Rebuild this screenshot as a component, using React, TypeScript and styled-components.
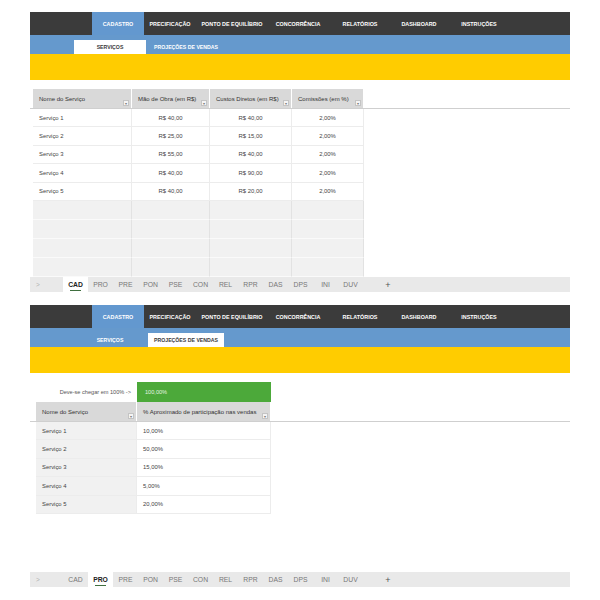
import React from 'react';
import styled, {createGlobalStyle} from 'styled-components';

const GlobalStyle = createGlobalStyle`
  body {
    margin: 0;
    background: #fff;
    font-family: 'Liberation Sans', Arial, sans-serif;
  }
`;

const MENU = [
  {label: 'CADASTRO', width: 52},
  {label: 'PRECIFICAÇÃO', width: 52},
  {label: 'PONTO DE EQUILÍBRIO', width: 72},
  {label: 'CONCORRÊNCIA', width: 60},
  {label: 'RELATÓRIOS', width: 64},
  {label: 'DASHBOARD', width: 54},
  {label: 'INSTRUÇÕES', width: 66},
];

const SUBTABS = [
  {label: 'SERVIÇOS', width: 72},
  {label: 'PROJEÇÕES DE VENDAS', width: 76},
];

const SHEETS = ['CAD', 'PRO', 'PRE', 'PON', 'PSE', 'CON', 'REL', 'RPR', 'DAS', 'DPS', 'INI', 'DUV'];

const SERVICES = [
  {name: 'Serviço 1', labor: 'R$ 40,00', direct: 'R$ 40,00', fee: '2,00%', share: '10,00%'},
  {name: 'Serviço 2', labor: 'R$ 25,00', direct: 'R$ 15,00', fee: '2,00%', share: '50,00%'},
  {name: 'Serviço 3', labor: 'R$ 55,00', direct: 'R$ 40,00', fee: '2,00%', share: '15,00%'},
  {name: 'Serviço 4', labor: 'R$ 40,00', direct: 'R$ 90,00', fee: '2,00%', share: '5,00%'},
  {name: 'Serviço 5', labor: 'R$ 40,00', direct: 'R$ 20,00', fee: '2,00%', share: '20,00%'},
];

const COSTS_COLS = [99, 78, 82, 72];
const SHARE_COLS = [101, 134];

const Header: React.FC<{sub: number}> = ({sub}) => (
  <>
    <MenuBar>
      {MENU.map((m, i) => (
        <MenuItem key={m.label} $w={m.width} $active={i === 0}>
          {m.label}
        </MenuItem>
      ))}
    </MenuBar>
    <SubBar>
      {SUBTABS.map((s, i) => (
        <SubTab key={s.label} $w={s.width} $active={i === sub}>
          {s.label}
        </SubTab>
      ))}
    </SubBar>
    <Banner />
  </>
);

const SheetBar: React.FC<{active: number}> = ({active}) => (
  <Sheets>
    <Arrow>&gt;</Arrow>
    {SHEETS.map((s, i) => (
      <Sheet key={s} $active={i === active}>
        {s}
      </Sheet>
    ))}
    <Plus>+</Plus>
  </Sheets>
);

const HeadCell: React.FC<{w: number; children: React.ReactNode}> = ({w, children}) => (
  <Th $w={w}>
    <HeadText>{children}</HeadText>
    <Drop>▾</Drop>
  </Th>
);

const CostsPanel: React.FC = () => (
  <Panel>
    <Header sub={0} />
    <Content $h={197}>
      <HeadRow>
        <HeadCell w={COSTS_COLS[0]}>Nome do Serviço</HeadCell>
        <HeadCell w={COSTS_COLS[1]}>Mão de Obra (em R$)</HeadCell>
        <HeadCell w={COSTS_COLS[2]}>Custos Diretos (em R$)</HeadCell>
        <HeadCell w={COSTS_COLS[3]}>Comissões (em %)</HeadCell>
      </HeadRow>
      {SERVICES.map(s => (
        <Row key={s.name}>
          <Td $w={COSTS_COLS[0]}>{s.name}</Td>
          <Td $w={COSTS_COLS[1]} $center>{s.labor}</Td>
          <Td $w={COSTS_COLS[2]} $center>{s.direct}</Td>
          <Td $w={COSTS_COLS[3]} $center>{s.fee}</Td>
        </Row>
      ))}
      {[0, 1, 2, 3].map(i => (
        <Row key={i} $empty>
          {COSTS_COLS.map((w, j) => (
            <Td key={j} $w={w} $empty />
          ))}
        </Row>
      ))}
    </Content>
    <SheetBar active={0} />
  </Panel>
);

const SharePanel: React.FC = () => (
  <Panel>
    <Header sub={1} />
    <Content $h={199}>
      <TargetRow>
        <TargetLabel $w={SHARE_COLS[0]}>Deve-se chegar em 100% -&gt;</TargetLabel>
        <TargetValue $w={SHARE_COLS[1]}>100,00%</TargetValue>
      </TargetRow>
      <HeadRow $flush>
        <HeadCell w={SHARE_COLS[0]}>Nome do Serviço</HeadCell>
        <HeadCell w={SHARE_COLS[1]}>% Aproximado de participação nas vendas</HeadCell>
      </HeadRow>
      {SERVICES.map(s => (
        <Row key={s.name} $flush>
          <Td $w={SHARE_COLS[0]} $shaded>{s.name}</Td>
          <Td $w={SHARE_COLS[1]}>{s.share}</Td>
        </Row>
      ))}
    </Content>
    <SheetBar active={1} />
  </Panel>
);

export default function App() {
  return (
    <>
      <GlobalStyle />
      <Page>
        <CostsPanel />
        <SharePanel />
      </Page>
    </>
  );
}

const Page = styled.div`
  display: flex;
  flex-direction: column;
  gap: 13px;
  padding: 12px 30px 0;
`;

const Panel = styled.div`
  width: 540px;
  display: flex;
  flex-direction: column;
`;

const MenuBar = styled.div`
  display: flex;
  height: 23px;
  padding-left: 62px;
  background: #3b3b3b;
`;

const MenuItem = styled.div<{$w: number; $active?: boolean}>`
  width: ${p => p.$w}px;
  display: flex;
  align-items: center;
  justify-content: center;
  white-space: nowrap;
  font-size: 5.4px;
  font-weight: bold;
  color: #fff;
  background: ${p => (p.$active ? '#6398cf' : 'transparent')};
`;

const SubBar = styled.div`
  display: flex;
  align-items: flex-end;
  gap: 2px;
  height: 19px;
  padding-left: 44px;
  background: #6599cd;
`;

const SubTab = styled.div<{$w: number; $active?: boolean}>`
  width: ${p => p.$w}px;
  height: 14px;
  display: flex;
  align-items: center;
  justify-content: center;
  white-space: nowrap;
  font-size: 5.2px;
  font-weight: bold;
  color: ${p => (p.$active ? '#3a3a3a' : '#fff')};
  background: ${p => (p.$active ? '#fff' : 'transparent')};
`;

const Banner = styled.div`
  height: 26px;
  background: #ffcc00;
`;

const Content = styled.div<{$h: number}>`
  height: ${p => p.$h}px;
  padding-top: 9px;
  box-sizing: border-box;
  background: #fff;
`;

const HeadRow = styled.div<{$flush?: boolean}>`
  display: flex;
  height: 19px;
  padding-left: ${p => (p.$flush ? 6 : 3)}px;
  border-bottom: 1px solid #cfcfcf;
`;

const Th = styled.div<{$w: number}>`
  position: relative;
  width: ${p => p.$w}px;
  display: flex;
  align-items: center;
  padding: 0 10px 0 6px;
  box-sizing: border-box;
  background: #d9d9d9;
  border-right: 1px solid #fff;
  overflow: hidden;
`;

const HeadText = styled.span`
  font-size: 6px;
  color: #333;
  white-space: nowrap;
`;

const Drop = styled.span`
  position: absolute;
  right: 2px;
  bottom: 2px;
  width: 6px;
  height: 6px;
  display: flex;
  align-items: center;
  justify-content: center;
  font-size: 4px;
  color: #777;
  background: #f4f4f4;
  border: 1px solid #c4c4c4;
  box-sizing: border-box;
`;

const Row = styled.div<{$empty?: boolean; $flush?: boolean}>`
  display: flex;
  height: ${p => (p.$empty ? 19 : 18.4)}px;
  padding-left: ${p => (p.$flush ? 6 : 3)}px;
`;

const Td = styled.div<{$w: number; $center?: boolean; $shaded?: boolean; $empty?: boolean}>`
  width: ${p => p.$w}px;
  display: flex;
  align-items: center;
  justify-content: ${p => (p.$center ? 'center' : 'flex-start')};
  padding-left: ${p => (p.$center ? 0 : 6)}px;
  box-sizing: border-box;
  font-size: 5.9px;
  color: #444;
  white-space: nowrap;
  background: ${p => (p.$empty || p.$shaded ? '#f1f1f1' : '#fff')};
  border-bottom: 1px solid ${p => (p.$empty ? '#fafafa' : '#ececec')};
  border-right: 1px solid ${p => (p.$empty ? '#e2e2e2' : '#ececec')};
`;

const TargetRow = styled.div`
  display: flex;
  height: 20px;
  padding-left: 6px;
`;

const TargetLabel = styled.div<{$w: number}>`
  width: ${p => p.$w}px;
  display: flex;
  align-items: center;
  justify-content: flex-end;
  padding-right: 6px;
  box-sizing: border-box;
  font-size: 5.6px;
  color: #555;
  white-space: nowrap;
`;

const TargetValue = styled.div<{$w: number}>`
  width: ${p => p.$w}px;
  display: flex;
  align-items: center;
  padding-left: 8px;
  box-sizing: border-box;
  font-size: 5.6px;
  color: #e6f3e0;
  background: #4ca93a;
`;

const Sheets = styled.div`
  display: flex;
  align-items: stretch;
  height: 15px;
  background: #e9e9e9;
`;

const Arrow = styled.div`
  width: 33px;
  display: flex;
  align-items: center;
  padding-left: 6px;
  box-sizing: border-box;
  font-size: 6.5px;
  color: #b0b0b0;
`;

const Sheet = styled.div<{$active?: boolean}>`
  position: relative;
  width: 25px;
  display: flex;
  align-items: center;
  justify-content: center;
  font-size: 6.8px;
  font-weight: ${p => (p.$active ? 'bold' : 'normal')};
  color: ${p => (p.$active ? '#222' : '#777')};
  background: ${p => (p.$active ? '#fff' : 'transparent')};

  &::after {
    content: '';
    display: ${p => (p.$active ? 'block' : 'none')};
    position: absolute;
    left: 7px;
    right: 7px;
    bottom: 1.5px;
    height: 1px;
    background: #3f6f3f;
  }
`;

const Plus = styled.div`
  width: 18px;
  margin-left: 16px;
  display: flex;
  align-items: center;
  justify-content: center;
  font-size: 9px;
  color: #555;
`;
